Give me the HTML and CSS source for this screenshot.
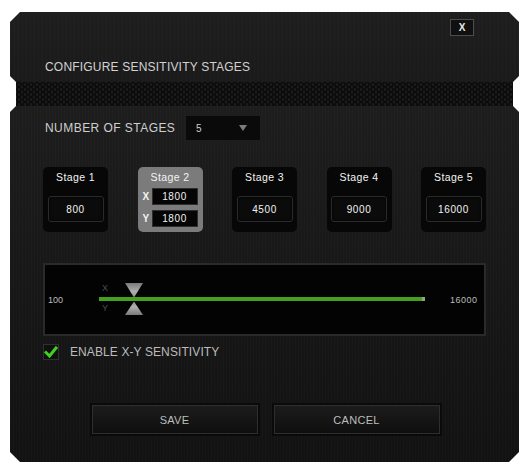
FILE: index.html
```html
<!DOCTYPE html>
<html>
<head>
<meta charset="utf-8">
<link rel="stylesheet" href="styles.css">
</head>
<body>
<div class="dialog">
  <div class="header">
    <button class="close">X</button>
    <h1 class="title">CONFIGURE SENSITIVITY STAGES</h1>
  </div>
  <div class="band"></div>
  <div class="main">
    <div class="count-row">
      <span class="count-label">NUMBER OF STAGES</span>
      <div class="select"><span class="select-val">5</span><span class="caret"></span></div>
    </div>
    <div class="stages">
      <div class="stage">
        <div class="stage-name">Stage 1</div>
        <div class="value">800</div>
      </div>
      <div class="stage stage-active">
        <div class="stage-name">Stage 2</div>
        <div class="xy-row"><span class="axis">X</span><span class="xy-val">1800</span></div>
        <div class="xy-row"><span class="axis">Y</span><span class="xy-val">1800</span></div>
      </div>
      <div class="stage">
        <div class="stage-name">Stage 3</div>
        <div class="value">4500</div>
      </div>
      <div class="stage">
        <div class="stage-name">Stage 4</div>
        <div class="value">9000</div>
      </div>
      <div class="stage">
        <div class="stage-name">Stage 5</div>
        <div class="value">16000</div>
      </div>
    </div>
    <div class="slider">
      <span class="min">100</span>
      <div class="track">
        <span class="axis-lbl axis-x">X</span>
        <span class="axis-lbl axis-y">Y</span>
        <span class="track-end"></span>
        <svg class="marker" width="18" height="33" viewBox="0 0 18 33">
          <defs>
            <linearGradient id="gt" x1="0" y1="0" x2="0" y2="1">
              <stop offset="0" stop-color="#7a7a7a"/>
              <stop offset="0.6" stop-color="#b0b0b0"/>
              <stop offset="1" stop-color="#8c8c8c"/>
            </linearGradient>
            <linearGradient id="gb" x1="0" y1="1" x2="0" y2="0">
              <stop offset="0" stop-color="#7a7a7a"/>
              <stop offset="0.6" stop-color="#b0b0b0"/>
              <stop offset="1" stop-color="#8c8c8c"/>
            </linearGradient>
          </defs>
          <polygon points="0,0 18,0 9,14.5" fill="url(#gt)"/>
          <polygon points="9,18.5 18,32 0,32" fill="url(#gb)"/>
        </svg>
      </div>
      <span class="max">16000</span>
    </div>
    <label class="check">
      <span class="box"><svg width="14" height="12" viewBox="0 0 14 12"><polyline points="2,6.5 5.5,10 12,2" fill="none" stroke="#3fd11d" stroke-width="3" stroke-linecap="square"/></svg></span>
      <span class="check-text">ENABLE X-Y SENSITIVITY</span>
    </label>
    <div class="actions">
      <button class="btn">SAVE</button>
      <button class="btn">CANCEL</button>
    </div>
  </div>
</div>
</body>
</html>
```

FILE: styles.css
```css
* { box-sizing: border-box; }
html, body { margin: 0; padding: 0; background: #ffffff; }
body { font-family: "Liberation Sans", Arial, sans-serif; }

.dialog {
  width: 509px;
  margin: 12px 0 0 10px;
  display: flex;
  flex-direction: column;
}

.header {
  height: 70px;
  padding-top: 7px;
  display: flex;
  flex-direction: column;
  background:
    repeating-linear-gradient(90deg, rgba(255,255,255,0.018) 0 1px, transparent 1px 4px),
    linear-gradient(180deg, #1e1e1e, #1a1a1a);
  clip-path: polygon(10px 0, calc(100% - 10px) 0, 100% 10px, 100% calc(100% - 6px), calc(100% - 6px) 100%, 6px 100%, 0 calc(100% - 6px), 0 10px);
}

.close {
  align-self: flex-end;
  margin-right: 45px;
  width: 24px;
  height: 17px;
  padding: 0;
  background: #101010;
  border: 1px solid #4c4c4c;
  color: #e8e8e8;
  font-family: "Liberation Sans", Arial, sans-serif;
  font-weight: bold;
  font-size: 10px;
  line-height: 15px;
}

.title {
  margin: 24px 0 0 35px;
  font-size: 12px;
  line-height: 14px;
  font-weight: normal;
  letter-spacing: 0.2px;
  color: #d2d2d2;
}

.band {
  height: 24px;
  margin: 0 6px;
  background-color: #0b0b0b;
  background-image:
    radial-gradient(circle, #1c1c1c 0 1px, transparent 1.6px),
    radial-gradient(circle, #1c1c1c 0 1px, transparent 1.6px);
  background-size: 6px 5px, 6px 5px;
  background-position: 0 0, 3px 2.5px;
}

.main {
  height: 356px;
  padding: 9px 33px 28px;
  display: flex;
  flex-direction: column;
  background:
    repeating-linear-gradient(90deg, rgba(255,255,255,0.016) 0 1px, transparent 1px 3px),
    linear-gradient(180deg, #1d1d1d, #151515 70%, #121212);
  clip-path: polygon(6px 0, calc(100% - 6px) 0, 100% 6px, 100% calc(100% - 10px), calc(100% - 10px) 100%, 10px 100%, 0 calc(100% - 10px), 0 6px);
}

.count-row {
  height: 26px;
  display: flex;
  align-items: center;
}

.count-label {
  width: 142px;
  padding-left: 2px;
  font-size: 12px;
  letter-spacing: 0.45px;
  color: #cfcfcf;
}

.select {
  width: 76px;
  height: 26px;
  display: flex;
  align-items: center;
  justify-content: space-between;
  padding: 0 13px 0 10px;
  background: #0a0a0a;
  border: 1px solid #1e1e1e;
}

.select-val {
  font-size: 10px;
  color: #cfcfcf;
}

.caret {
  width: 0;
  height: 0;
  border-left: 4px solid transparent;
  border-right: 4px solid transparent;
  border-top: 6px solid #7c7c7c;
}

.stages {
  margin-top: 26px;
  height: 65px;
  display: flex;
  justify-content: space-between;
}

.stage {
  width: 65px;
  height: 65px;
  border-radius: 5px;
  background: #070707;
  display: flex;
  flex-direction: column;
  align-items: center;
  padding-top: 3px;
}

.stage-name {
  height: 14px;
  line-height: 14px;
  font-size: 10.5px;
  letter-spacing: 0.4px;
  color: #f4f4f4;
}

.value {
  margin-top: 12px;
  width: 56px;
  height: 26px;
  border-radius: 3px;
  border: 1px solid #2a2a2a;
  background: #0b0b0b;
  box-shadow: inset 0 0 3px #000;
  display: flex;
  align-items: center;
  justify-content: center;
  font-size: 10px;
  letter-spacing: 0.6px;
  color: #f2f2f2;
}

.stage-active {
  background: #7b7b7b;
  align-items: stretch;
}

.stage-active .stage-name { text-align: center; }

.xy-row {
  display: flex;
  align-items: center;
  margin-top: 4px;
  padding: 0 5px 0 5px;
  height: 17px;
}
.xy-row + .xy-row { margin-top: 5px; }

.axis {
  width: 9px;
  font-size: 10px;
  font-weight: bold;
  color: #f4f4f4;
}

.xy-val {
  flex: 1;
  height: 17px;
  background: #050505;
  border: 1px solid #2e2e2e;
  display: flex;
  align-items: center;
  justify-content: center;
  font-size: 10px;
  letter-spacing: 0.6px;
  color: #f2f2f2;
}

.slider {
  margin-top: 31px;
  height: 73px;
  border: 2px solid #2a2a2a;
  background: #030303;
  display: flex;
  align-items: center;
  padding: 0 4px 0 3px;
}

.min {
  width: 51px;
  font-size: 9px;
  color: #bdbdbd;
}

.max {
  width: 30px;
  margin-left: 25px;
  font-size: 9px;
  letter-spacing: 0.5px;
  color: #bdbdbd;
}

.track {
  flex: 1;
  height: 4px;
  margin-top: -1px;
  background: #44a021;
  position: relative;
}

.track-end {
  position: absolute;
  right: 0;
  top: 0;
  width: 3px;
  height: 4px;
  background: #8fa588;
}

.axis-lbl {
  position: absolute;
  left: 3px;
  font-size: 9px;
  line-height: 10px;
  color: #4e4e4e;
}
.axis-x { top: -14px; }
.axis-y { top: 6px; }

.marker {
  position: absolute;
  left: 26px;
  top: -14px;
}

.check {
  margin-top: 8px;
  height: 16px;
  display: flex;
  align-items: center;
}

.box {
  width: 16px;
  height: 16px;
  background: #101010;
  border: 1px solid #303030;
  display: flex;
  align-items: center;
  justify-content: center;
}

.check-text {
  margin-left: 11px;
  font-size: 12px;
  letter-spacing: 0.1px;
  color: #bcbcbc;
}

.actions {
  margin-top: 45px;
  height: 29px;
  display: flex;
  justify-content: center;
  gap: 16px;
  padding-left: 2px;
}

.btn {
  width: 166px;
  height: 29px;
  padding: 0;
  border: 1px solid #2e2e2e;
  outline: 2px solid #0a0a0a;
  background: linear-gradient(180deg, #1c1c1c, #0e0e0e);
  color: #bdbdbd;
  font-family: "Liberation Sans", Arial, sans-serif;
  font-size: 11px;
  letter-spacing: 0.3px;
}
```
